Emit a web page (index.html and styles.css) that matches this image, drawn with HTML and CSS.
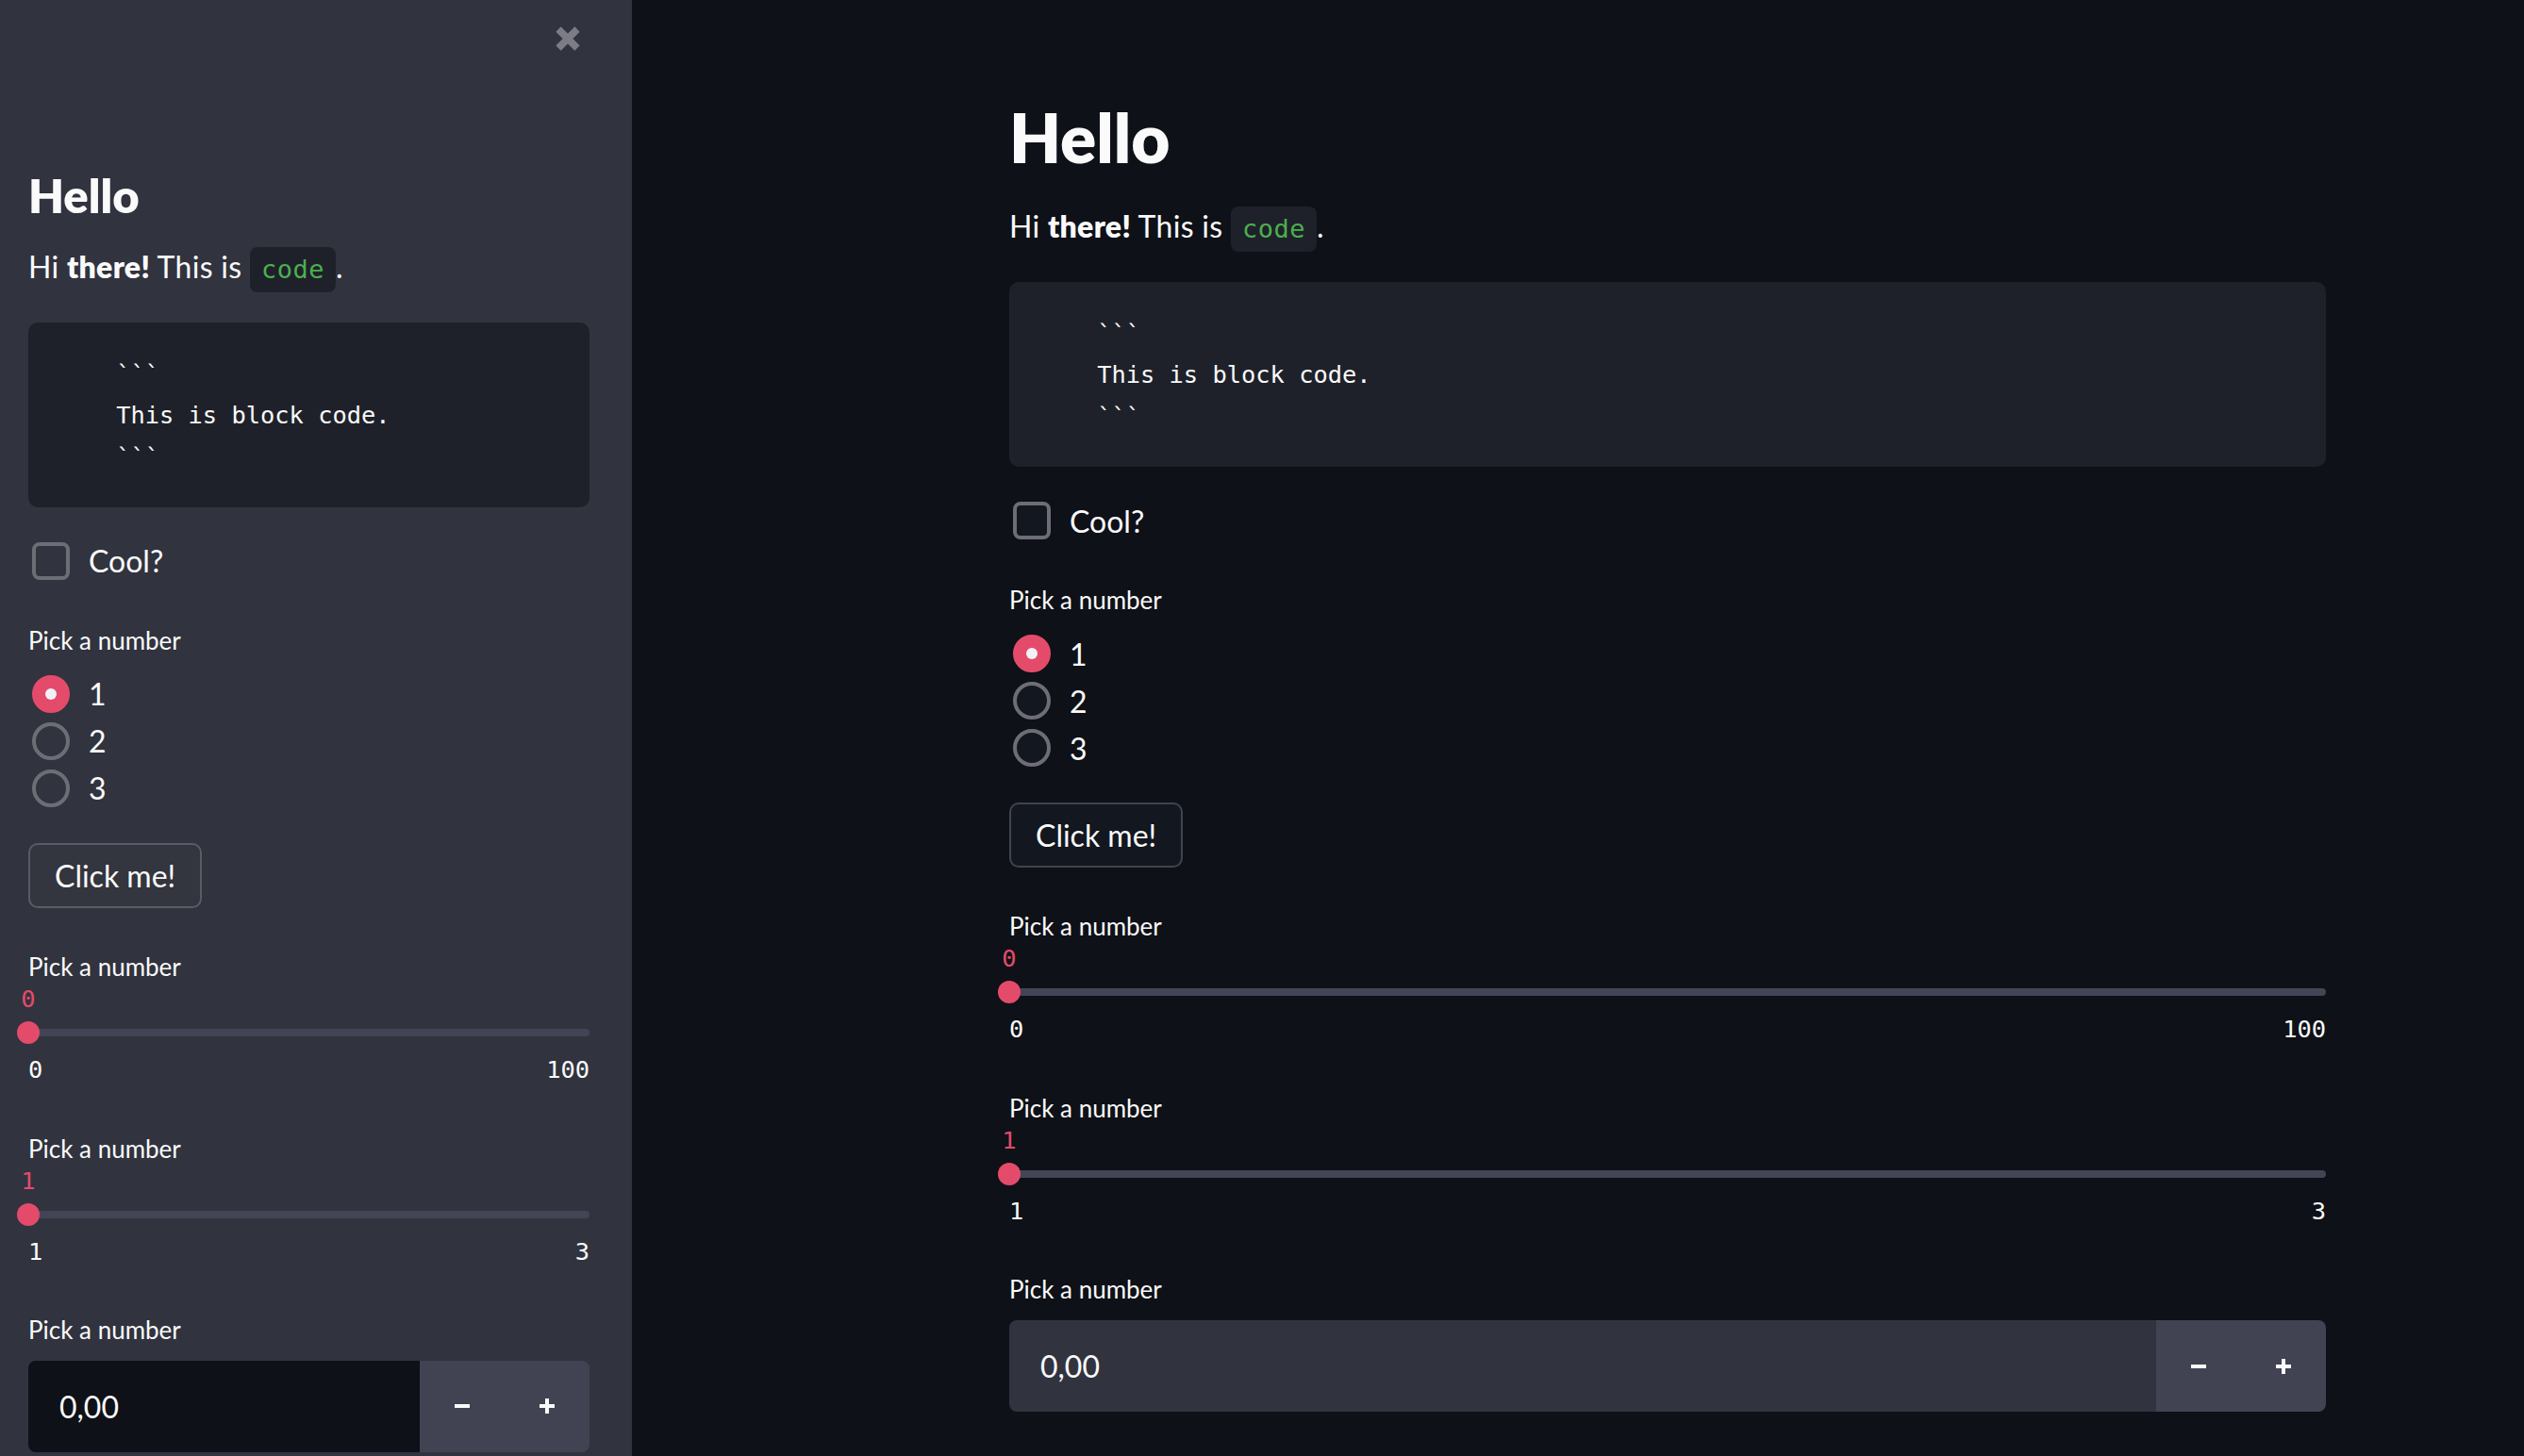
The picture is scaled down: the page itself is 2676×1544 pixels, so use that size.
FILE: index.html
```html
<!DOCTYPE html>
<html lang="en">
<head>
<meta charset="utf-8">
<title>Hello</title>
<link rel="stylesheet" href="styles.css">
</head>
<body>
<div class="app">
  <aside class="sidebar">
    <div class="sb-header">
      <button class="close" aria-label="Close sidebar">
        <svg width="28" height="28" viewBox="0 0 28 28"><path d="M4 4L24 24M24 4L4 24" stroke="#7b7c85" stroke-width="7.5" fill="none"/></svg>
      </button>
    </div>
    <div class="content">
      <h1 class="title sb-title">Hello</h1>
      <p class="para">Hi <strong>there!</strong> This is <code class="inline">code</code>.</p>
      <div class="stack">
        <pre class="codeblock">    ```
    This is block code.
    ```</pre>
        <label class="checkbox"><span class="box"></span><span>Cool?</span></label>
        <div class="radio-group">
          <div class="wlabel">Pick a number</div>
          <div class="opts">
            <div class="opt"><span class="dot on"><span class="inner"></span></span><span>1</span></div>
            <div class="opt"><span class="dot"></span><span>2</span></div>
            <div class="opt"><span class="dot"></span><span>3</span></div>
          </div>
        </div>
        <button class="btn">Click me!</button>
        <div class="slider">
          <div class="wlabel">Pick a number</div>
          <div class="sval"><span>0</span></div>
          <div class="track-row"><div class="track"><span class="thumb"></span></div></div>
          <div class="minmax"><span>0</span><span>100</span></div>
        </div>
        <div class="slider">
          <div class="wlabel">Pick a number</div>
          <div class="sval"><span>1</span></div>
          <div class="track-row"><div class="track"><span class="thumb"></span></div></div>
          <div class="minmax"><span>1</span><span>3</span></div>
        </div>
        <div class="numfield">
          <div class="wlabel">Pick a number</div>
          <div class="numinput">
            <div class="numval">0,00</div>
            <div class="step"><svg width="16" height="16" viewBox="0 0 16 16"><path d="M0 8H16" stroke="#fafafa" stroke-width="4"/></svg></div>
            <div class="step"><svg width="16" height="16" viewBox="0 0 16 16"><path d="M0 8H16M8 0V16" stroke="#fafafa" stroke-width="4"/></svg></div>
          </div>
        </div>
      </div>
    </div>
  </aside>
  <main class="main">
    <div class="content">
      <h1 class="title main-title">Hello</h1>
      <p class="para">Hi <strong>there!</strong> This is <code class="inline">code</code>.</p>
      <div class="stack">
        <pre class="codeblock">    ```
    This is block code.
    ```</pre>
        <label class="checkbox"><span class="box"></span><span>Cool?</span></label>
        <div class="radio-group">
          <div class="wlabel">Pick a number</div>
          <div class="opts">
            <div class="opt"><span class="dot on"><span class="inner"></span></span><span>1</span></div>
            <div class="opt"><span class="dot"></span><span>2</span></div>
            <div class="opt"><span class="dot"></span><span>3</span></div>
          </div>
        </div>
        <button class="btn">Click me!</button>
        <div class="slider">
          <div class="wlabel">Pick a number</div>
          <div class="sval"><span>0</span></div>
          <div class="track-row"><div class="track"><span class="thumb"></span></div></div>
          <div class="minmax"><span>0</span><span>100</span></div>
        </div>
        <div class="slider">
          <div class="wlabel">Pick a number</div>
          <div class="sval"><span>1</span></div>
          <div class="track-row"><div class="track"><span class="thumb"></span></div></div>
          <div class="minmax"><span>1</span><span>3</span></div>
        </div>
        <div class="numfield">
          <div class="wlabel">Pick a number</div>
          <div class="numinput">
            <div class="numval">0,00</div>
            <div class="step"><svg width="16" height="16" viewBox="0 0 16 16"><path d="M0 8H16" stroke="#fafafa" stroke-width="4"/></svg></div>
            <div class="step"><svg width="16" height="16" viewBox="0 0 16 16"><path d="M0 8H16M8 0V16" stroke="#fafafa" stroke-width="4"/></svg></div>
          </div>
        </div>
      </div>
    </div>
  </main>
</div>
</body>
</html>
```

FILE: styles.css
```css
html, body {
  margin: 0;
  padding: 0;
  width: 2676px;
  height: 1544px;
  overflow: hidden;
  background: #0e1117;
  color: #fafafa;
  font-family: Lato, "Noto Sans", sans-serif;
}

.app {
  display: flex;
  height: 1544px;
}

/* ---------- sidebar ---------- */
.sidebar {
  width: 670px;
  flex: none;
  background: #31333f;
  --input-bg: #0e1117;
  --btn-bg: #33353f;
  --ctl-bg: transparent;
}

.sb-header {
  height: 82px;
  display: flex;
  justify-content: flex-end;
  align-items: center;
  padding-right: 54px;
}

.close {
  width: 28px;
  height: 28px;
  padding: 0;
  border: 0;
  background: none;
  display: block;
}
.close svg { display: block; }

.sidebar .content {
  padding: 0 45px 0 30px;
}

/* ---------- main ---------- */
.main {
  flex: 1;
  padding: 103px 0 0 400px;
  --input-bg: #31333f;
  --btn-bg: #131720;
  --ctl-bg: #131720;
}

.main .content {
  width: 1396px;
}

/* ---------- shared ---------- */
.title {
  margin: 0;
  font-weight: 800;
  line-height: 1.2;
}
.main-title { font-size: 71px; }
.sb-title { font-size: 49px; margin-top: 96px; }

.para {
  margin: 31px 0 0;
  font-size: 32px;
  line-height: 34px;
  letter-spacing: 0.3px;
}
.sidebar .para { margin-top: 25px; }

.para strong { font-weight: 800; }

.inline {
  display: inline-block;
  font-family: "DejaVu Sans Mono", "Liberation Mono", monospace;
  font-size: 27px;
  line-height: 34px;
  letter-spacing: 0.5px;
  padding: 7px 12px;
  border-radius: 8px;
  background: #1f212a;
  color: #4caf50;
}

.stack {
  display: flex;
  flex-direction: column;
  gap: 32px;
  margin-top: 32px;
}

.codeblock {
  margin: 0;
  padding: 32px;
  border-radius: 10px;
  background: #1f212a;
  font-family: "DejaVu Sans Mono", "Liberation Mono", monospace;
  font-size: 25.4px;
  line-height: 44px;
  color: #fafafa;
}

.checkbox {
  display: flex;
  align-items: center;
  gap: 20px;
  height: 50px;
  padding-left: 4px;
  font-size: 32px;
}

.box {
  width: 40px;
  height: 40px;
  box-sizing: border-box;
  border: 4px solid #6d6e75;
  border-radius: 8px;
  background: var(--ctl-bg);
}

.wlabel {
  height: 56px;
  line-height: 54px;
  font-size: 26px;
}
.slider .wlabel,
.numfield .wlabel {
  line-height: 58px;
}

.radio-group {
  display: flex;
  flex-direction: column;
}

.opts {
  margin-top: 3px;
  display: flex;
  flex-direction: column;
}

.opt {
  height: 50px;
  display: flex;
  align-items: center;
  gap: 20px;
  padding-left: 4px;
  font-size: 32px;
}

.dot {
  width: 40px;
  height: 40px;
  box-sizing: border-box;
  border: 4px solid #6d6e75;
  border-radius: 50%;
  background: var(--ctl-bg);
  display: flex;
  align-items: center;
  justify-content: center;
}
.dot.on {
  border-color: #e44b6b;
  background: #e44b6b;
}
.inner {
  width: 12px;
  height: 12px;
  border-radius: 50%;
  background: #f0f2f6;
}

.btn {
  align-self: flex-start;
  margin-top: 1px;
  height: 69px;
  box-sizing: border-box;
  padding: 0 26px;
  border: 2px solid rgba(250, 250, 250, 0.2);
  border-radius: 10px;
  background: var(--btn-bg);
  color: #fafafa;
  font-family: Lato, "Noto Sans", sans-serif;
  font-size: 32px;
}

.slider {
  display: flex;
  flex-direction: column;
  margin-top: 1px;
  padding-bottom: 4px;
}

.sval {
  height: 30px;
  line-height: 30px;
  margin-top: -8px;
  font-family: "DejaVu Sans Mono", "Liberation Mono", monospace;
  font-size: 25.4px;
  color: #e44b6b;
}
.sval span {
  display: inline-block;
  transform: translateX(-50%);
}

.track-row {
  height: 42px;
  display: flex;
  align-items: center;
}

.track {
  position: relative;
  width: 100%;
  height: 8px;
  border-radius: 4px;
  background: #434556;
}

.thumb {
  position: absolute;
  left: -12px;
  top: -8px;
  width: 24px;
  height: 24px;
  border-radius: 50%;
  background: #e44b6b;
}

.minmax {
  display: flex;
  justify-content: space-between;
  height: 36px;
  line-height: 36px;
  font-family: "DejaVu Sans Mono", "Liberation Mono", monospace;
  font-size: 25.4px;
}

.numfield {
  display: flex;
  flex-direction: column;
}

.numinput {
  margin-top: 6px;
  height: 97px;
  display: flex;
  border-radius: 8px;
  overflow: hidden;
}

.numval {
  flex: 1;
  display: flex;
  align-items: center;
  padding-left: 33px;
  background: var(--input-bg);
  font-size: 32px;
}

.step {
  width: 90px;
  display: flex;
  align-items: center;
  justify-content: center;
  background: #414353;
}
.step svg { display: block; }
```
